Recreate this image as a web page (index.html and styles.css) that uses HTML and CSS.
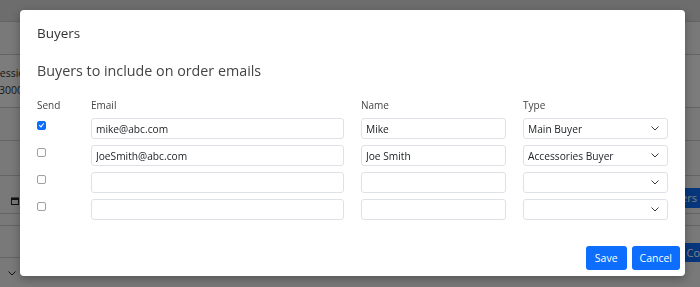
FILE: index.html
```html
<!DOCTYPE html>
<html lang="en">
<head>
    <meta charset="UTF-8">
    <meta name="viewport" content="width=device-width, initial-scale=1.0">
    <title>Order - Buyers</title>
    <link rel="stylesheet" href="styles.css">
</head>
<body>

    <!-- page behind the dialog -->
    <div class="page">
        <div class="topbar"></div>
        <div class="page-row"></div>
        <div class="page-row session">
            <div class="session-text">
                <span>Session</span>
                <span class="session-no">30001</span>
            </div>
        </div>
        <div class="page-row"></div>
        <div class="page-row r35"></div>
        <div class="page-row date">
            <svg class="cal" width="8" height="8" viewBox="0 0 8 8">
                <rect x="0.5" y="1" width="7" height="6.5" fill="none" stroke="#222" stroke-width="1"/>
                <rect x="0.5" y="1" width="7" height="2" fill="#222"/>
            </svg>
            <span class="page-btn">Buyers</span>
        </div>
        <div class="page-row thin"></div>
        <div class="page-row last">
            <span class="page-btn">Confirm</span>
        </div>
        <div class="page-row bottom">
            <svg class="chev" width="8" height="5" viewBox="0 0 8 5">
                <path d="M0.5 0.5 L4 4 L7.5 0.5" fill="none" stroke="#222" stroke-width="1"/>
            </svg>
        </div>
    </div>

    <div class="backdrop"></div>

    <div class="modal">
        <div class="modal-header">Buyers</div>
        <div class="modal-body">
            <h3>Buyers to include on order emails</h3>
            <div class="buyer-grid">
                <div class="col-label">Send</div>
                <div class="col-label">Email</div>
                <div class="col-label">Name</div>
                <div class="col-label">Type</div>

                <div class="send"><input type="checkbox" checked></div>
                <input type="text" class="field" value="mike@abc.com">
                <input type="text" class="field" value="Mike">
                <div class="select-wrap">
                    <select class="field"><option>Main Buyer</option></select>
                    <svg class="arrow" width="8" height="5" viewBox="0 0 8 5"><path d="M0.5 0.5 L4 4 L7.5 0.5" fill="none" stroke="#343a40" stroke-width="1"/></svg>
                </div>

                <div class="send"><input type="checkbox"></div>
                <input type="text" class="field" value="JoeSmith@abc.com">
                <input type="text" class="field" value="Joe Smith">
                <div class="select-wrap">
                    <select class="field"><option>Accessories Buyer</option></select>
                    <svg class="arrow" width="8" height="5" viewBox="0 0 8 5"><path d="M0.5 0.5 L4 4 L7.5 0.5" fill="none" stroke="#343a40" stroke-width="1"/></svg>
                </div>

                <div class="send"><input type="checkbox"></div>
                <input type="text" class="field" value="">
                <input type="text" class="field" value="">
                <div class="select-wrap">
                    <select class="field"><option></option></select>
                    <svg class="arrow" width="8" height="5" viewBox="0 0 8 5"><path d="M0.5 0.5 L4 4 L7.5 0.5" fill="none" stroke="#343a40" stroke-width="1"/></svg>
                </div>

                <div class="send"><input type="checkbox"></div>
                <input type="text" class="field" value="">
                <input type="text" class="field" value="">
                <div class="select-wrap">
                    <select class="field"><option></option></select>
                    <svg class="arrow" width="8" height="5" viewBox="0 0 8 5"><path d="M0.5 0.5 L4 4 L7.5 0.5" fill="none" stroke="#343a40" stroke-width="1"/></svg>
                </div>
            </div>
        </div>
        <div class="modal-footer">
            <button class="btn">Save</button>
            <button class="btn">Cancel</button>
        </div>
    </div>

</body>
</html>
```
FILE: styles.css
```css
* {
    box-sizing: border-box;
}
body {
    font-family: "Open Sans", "Liberation Sans", sans-serif;
    margin: 0;
    padding: 0;
    background-color: #f2f2f2;
    color: #212529;
    overflow: hidden;
}

/* page behind */
.page {
    width: 700px;
    height: 287px;
    overflow: hidden;
}
.topbar {
    height: 21px;
    background: #dadada;
}
.page-row {
    height: 33px;
    border-top: 1px solid #c8c8c8;
    display: flex;
    align-items: flex-start;
    justify-content: space-between;
}
.page-row.session {
    height: 53px;
    background: #f8f8f8;
}
.session-text {
    display: flex;
    flex-direction: column;
    margin-left: -6px;
    padding-top: 10px;
    font-size: 10.5px;
    line-height: 17px;
    color: #333;
}
.session-no {
    margin-left: 5px;
}
.page-row.r35 {
    height: 35px;
}
.page-row.date {
    height: 38px;
    padding: 12px 0 0 11px;
}
.page-row.date .cal {
    margin-top: 9px;
}
.page-row.thin {
    height: 12px;
}
.page-row.last {
    height: 32px;
    justify-content: flex-end;
    padding-top: 17px;
    overflow: visible;
}
.page-row.bottom {
    height: 30px;
    padding: 13px 0 0 8px;
}
.page-btn {
    background: #0d6efd;
    color: white;
    font-size: 11px;
    height: 20px;
    line-height: 20px;
    padding: 0 6px 0 8px;
    margin-right: -3px;
    position: relative;
}
.page-row.last .page-btn {
    height: 19px;
    line-height: 19px;
    margin-right: -34px;
}

.backdrop {
    position: fixed;
    inset: 0;
    background: rgba(0, 0, 0, 0.5);
}

/* dialog */
.modal {
    position: absolute;
    left: 20px;
    top: 10px;
    width: 665px;
    height: 266px;
    background: white;
    border-radius: 4px;
    box-shadow: 0 3px 10px rgba(0, 0, 0, 0.3);
    display: flex;
    flex-direction: column;
}
.modal-header {
    padding: 14px 17px 0;
    font-size: 13.5px;
    line-height: 18px;
    color: #333;
}
.modal-body {
    padding: 0 17px;
    flex: 1;
}
.modal-body h3 {
    margin: 19px 0 0;
    font-size: 14.3px;
    line-height: 20px;
    font-weight: normal;
    color: #444;
}
.buyer-grid {
    display: grid;
    grid-template-columns: 37px 253px 145px 145px;
    grid-template-rows: 14px;
    grid-auto-rows: 21px;
    column-gap: 17px;
    row-gap: 6px;
    margin-top: 17px;
}
.col-label {
    font-size: 10px;
    line-height: 14px;
    color: #444;
}
.send {
    padding-top: 3px;
}
.send input {
    appearance: none;
    -webkit-appearance: none;
    width: 9px;
    height: 9px;
    margin: 0;
    border: 1px solid #a0a0a0;
    border-radius: 2px;
    background: white;
    position: relative;
    display: block;
}
.send input:checked {
    background: #0d6efd;
    border-color: #0d6efd;
}
.send input:checked::after {
    content: "";
    position: absolute;
    left: 2px;
    top: 0px;
    width: 2px;
    height: 4px;
    border: solid white;
    border-width: 0 1.5px 1.5px 0;
    transform: rotate(40deg);
}
.field {
    display: block;
    width: 100%;
    height: 21px;
    margin: 0;
    border: 1px solid #dee2e6;
    border-radius: 3px;
    padding: 0 4px;
    font-family: "Open Sans", "Liberation Sans", sans-serif;
    font-size: 10.2px;
    color: #212529;
    background: white;
    outline: none;
}
.select-wrap {
    position: relative;
}
.select-wrap select {
    appearance: none;
    -webkit-appearance: none;
}
.select-wrap .arrow {
    position: absolute;
    right: 9px;
    top: 8px;
    pointer-events: none;
}
.modal-footer {
    display: flex;
    justify-content: flex-end;
    gap: 5px;
    padding: 0 5px 6px 0;
}
.btn {
    height: 24px;
    padding: 0 8px;
    background: #0d6efd;
    color: white;
    border: none;
    border-radius: 3px;
    font-family: "Open Sans", "Liberation Sans", sans-serif;
    font-size: 10.5px;
    cursor: pointer;
}
.btn:first-child {
    padding: 0 9px;
}
.btn:hover {
    background: #0b5ed7;
}
```
